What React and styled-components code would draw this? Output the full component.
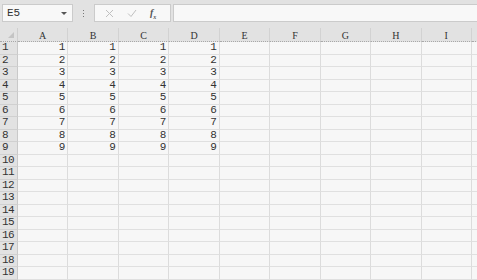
import React from "react";
import styled, { createGlobalStyle } from "styled-components";

const Global = createGlobalStyle`
  html, body { margin: 0; padding: 0; background: #f7f7f7; overflow: hidden; }
  body { font-family: "Liberation Mono", "DejaVu Sans Mono", monospace; }
`;

const COLS = ["A", "B", "C", "D", "E", "F", "G", "H", "I", "J"];
const COL_W = 50.44;
const ROW_H = 12.5;

const Page = styled.div`
  width: 477px;
  height: 280px;
  overflow: hidden;
  background: #f7f7f7;
`;

const Toolbar = styled.div`
  height: 28px;
  background: #e2e2e2;
  display: flex;
  align-items: flex-start;
  padding: 4px 0 0 2px;
  box-sizing: border-box;
`;

const NameBox = styled.div`
  width: 71px;
  height: 18px;
  box-sizing: border-box;
  background: #f8f8f8;
  border: 1px solid #cbcbcb;
  display: flex;
  align-items: center;
  justify-content: space-between;
  padding: 0 5px 0 4px;
  font-family: "Liberation Mono", monospace;
  font-size: 11px;
  color: #333;
`;

const Caret = styled.span`
  width: 0;
  height: 0;
  border-left: 3px solid transparent;
  border-right: 3px solid transparent;
  border-top: 3px solid #555;
`;

const Sep = styled.div`
  width: 21px;
  height: 18px;
  display: flex;
  flex-direction: column;
  align-items: center;
  justify-content: center;
  gap: 2px;
`;

const Dot = styled.span`
  width: 1px;
  height: 1px;
  background: #777;
`;

const FxBox = styled.div`
  width: 77px;
  height: 18px;
  box-sizing: border-box;
  background: #f8f8f8;
  border: 1px solid #cbcbcb;
  display: flex;
  align-items: center;
  padding-left: 10px;
  gap: 13px;
`;

const FxIcon = styled.span`
  font-family: "Liberation Serif", serif;
  font-style: italic;
  font-weight: bold;
  font-size: 10px;
  color: #555;
  width: 12px;
`;

const Sub = styled.sub`
  font-size: 6px;
`;

const Input = styled.div`
  flex: 1;
  height: 18px;
  margin-left: 2px;
  box-sizing: border-box;
  background: #f8f8f8;
  border: 1px solid #cbcbcb;
  border-right: none;
`;

const Grid = styled.div`
  display: grid;
  grid-template-columns: 18px repeat(10, ${COL_W}px);
  grid-auto-rows: ${ROW_H}px;
  grid-template-rows: 14px;
`;

const Corner = styled.div`
  background: #e2e2e2;
  border-bottom: 1px dotted #a8a8a8;
  border-right: 1px solid #cfcfcf;
  box-sizing: border-box;
  position: relative;
  &::after {
    content: "";
    position: absolute;
    right: 3px;
    bottom: 3px;
    border-left: 6px solid transparent;
    border-bottom: 6px solid #c4c4c4;
  }
`;

const ColHead = styled.div`
  background: #e2e2e2;
  border-bottom: 1px dotted #a8a8a8;
  border-right: 1px solid #d2d2d2;
  box-sizing: border-box;
  display: flex;
  align-items: center;
  justify-content: center;
  font-family: "Liberation Serif", serif;
  font-size: 10px;
  color: #333;
  padding-top: 1px;
`;

const RowHead = styled.div`
  background: #e2e2e2;
  border-bottom: 1px solid #d0d0d0;
  border-right: 1px solid #c9c9c9;
  box-sizing: border-box;
  display: flex;
  align-items: center;
  padding-left: 2px;
  font-size: 11px;
  line-height: 1;
  color: #333;
  letter-spacing: -0.5px;
`;

const Cell = styled.div`
  border-bottom: 1px solid #e0e0e0;
  border-right: 1px solid #dcdcdc;
  box-sizing: border-box;
  display: flex;
  align-items: center;
  justify-content: flex-end;
  padding-right: 2px;
  font-size: 11px;
  line-height: 1;
  color: #333;
`;

export default function App() {
  const rows = Array.from({ length: 19 }, (_, i) => i + 1);
  return (
    <Page>
      <Global />
      <Toolbar>
        <NameBox>
          <span>E5</span>
          <Caret />
        </NameBox>
        <Sep>
          <Dot />
          <Dot />
          <Dot />
        </Sep>
        <FxBox>
          <svg width="9" height="9" viewBox="0 0 9 9">
            <path d="M1 1L8 8M8 1L1 8" stroke="#c0c0c0" strokeWidth="1" fill="none" />
          </svg>
          <svg width="10" height="9" viewBox="0 0 10 9">
            <path d="M1 4.5L4 7.5L9 1" stroke="#c0c0c0" strokeWidth="1" fill="none" />
          </svg>
          <FxIcon>
            f<Sub>x</Sub>
          </FxIcon>
        </FxBox>
        <Input />
      </Toolbar>
      <Grid>
        <Corner />
        {COLS.map((c) => (
          <ColHead key={c}>{c === "J" ? "" : c}</ColHead>
        ))}
        {rows.map((r) => (
          <React.Fragment key={r}>
            <RowHead>{r}</RowHead>
            {COLS.map((c, ci) => (
              <Cell key={c}>{ci < 4 && r <= 9 ? r : ""}</Cell>
            ))}
          </React.Fragment>
        ))}
      </Grid>
    </Page>
  );
}
